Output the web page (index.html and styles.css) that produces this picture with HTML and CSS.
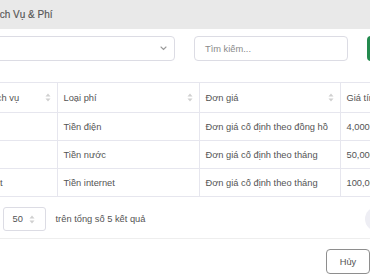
FILE: index.html
```html
<!DOCTYPE html>
<html lang="vi">
<head>
<meta charset="utf-8">
<title>Danh Sách Dịch Vụ & Phí</title>
<link rel="stylesheet" href="styles.css">
</head>
<body>
<div class="modal">
  <div class="modal-head"><h2 class="modal-title">Danh Sách Dịch Vụ &amp; Phí</h2></div>
  <div class="modal-body">
    <div class="toolbar">
      <div class="select">
        <span class="select-value"></span>
        <svg class="chevron" width="7" height="5" viewBox="0 0 7 5"><path d="M1 1l2.5 2.5L6 1" fill="none" stroke="#9a9a9a" stroke-width="1.1" stroke-linecap="round"/></svg>
      </div>
      <div class="search">Tìm kiếm...</div>
      <button class="btn-green">Thêm</button>
    </div>
    <table class="grid">
      <colgroup><col class="c1"><col class="c2"><col class="c3"><col class="c4"></colgroup>
      <thead>
        <tr>
          <th><div class="th-in"><span>Tên dịch vụ</span><svg class="sort" width="6" height="9" viewBox="0 0 6 9"><path d="M3 0.5L5.5 3.5H0.5Z M3 8.5L5.5 5.5H0.5Z" fill="#d0d0d0"/></svg></div></th>
          <th><div class="th-in"><span>Loại phí</span><svg class="sort" width="6" height="9" viewBox="0 0 6 9"><path d="M3 0.5L5.5 3.5H0.5Z M3 8.5L5.5 5.5H0.5Z" fill="#d0d0d0"/></svg></div></th>
          <th><div class="th-in"><span>Đơn giá</span><svg class="sort" width="6" height="9" viewBox="0 0 6 9"><path d="M3 0.5L5.5 3.5H0.5Z M3 8.5L5.5 5.5H0.5Z" fill="#d0d0d0"/></svg></div></th>
          <th><div class="th-in"><span>Giá tính</span></div></th>
        </tr>
      </thead>
      <tbody>
        <tr><td>Điện</td><td>Tiền điện</td><td>Đơn giá cố định theo đồng hồ</td><td>4,000</td></tr>
        <tr><td>Nước</td><td>Tiền nước</td><td>Đơn giá cố định theo tháng</td><td>50,000</td></tr>
        <tr><td>Internet</td><td>Tiền internet</td><td>Đơn giá cố định theo tháng</td><td>100,000</td></tr>
      </tbody>
    </table>
    <div class="pager">
      <div class="pager-left">
        <span class="lbl">Hiển thị</span>
        <div class="size-select"><span>50</span><svg class="sort" width="6" height="9" viewBox="0 0 6 9"><path d="M3 0.5L5.5 3.5H0.5Z M3 8.5L5.5 5.5H0.5Z" fill="#d0d0d0"/></svg></div>
        <span class="total">trên tổng số 5 kết quả</span>
      </div>
      <div class="pager-right">
        <span class="pg"></span><span class="pg"></span><span class="pg"></span>
      </div>
    </div>
  </div>
  <div class="modal-foot">
    <button class="btn-cancel">Hủy</button>
    <button class="btn-ok">Chọn</button>
  </div>
</div>
</body>
</html>
```
FILE: styles.css
```css
html, body {
  margin: 0;
  padding: 0;
  background: #ffffff;
  overflow: hidden;
}
body {
  width: 370px;
  height: 280px;
  font-family: "Liberation Sans", Arial, sans-serif;
  color: #545454;
  font-size: 9.3px;
}
.modal {
  width: 520px;
  margin-left: -50px;
}
.modal-head {
  height: 29px;
  background: #e9e9e9;
  display: flex;
  align-items: center;
  padding-left: -12px;
}
.modal-title {
  margin: 0 0 0 -12px;
  font-size: 10px;
  font-weight: normal;
  color: #555;
  -webkit-text-stroke: 0.15px #555;
}
.modal-body {
  padding: 7px 15px 0 15px;
}
.toolbar {
  display: flex;
  gap: 19px;
  height: 25px;
}
.select {
  width: 210px;
  box-sizing: border-box;
  border: 1px solid #dcdce4;
  border-radius: 4px;
  display: flex;
  align-items: center;
  justify-content: flex-end;
  padding-right: 7px;
}
.search {
  width: 154px;
  box-sizing: border-box;
  border: 1px solid #dcdce4;
  border-radius: 4px;
  display: flex;
  align-items: center;
  padding-left: 10px;
  color: #8a8a8a;
}
.btn-green {
  width: 60px;
  border: none;
  border-radius: 4px;
  background: #238a4e;
  color: #fff;
  font: inherit;
}
.grid {
  margin-top: 21px;
  width: 490px;
  border-collapse: collapse;
  table-layout: fixed;
}
.c1 { width: 92px; }
.c2 { width: 142px; }
.c3 { width: 141px; }
.c4 { width: 115px; }
.grid th, .grid td {
  border: 1px solid #e6e6ee;
  text-align: left;
  font-weight: normal;
  padding: 0 0 0 6px;
  white-space: nowrap;
  overflow: hidden;
}
.grid th {
  height: 29px;
  padding-right: 6px;
}
.grid td {
  height: 27px;
}
.grid tr > :first-child { border-left: none; }
.th-in {
  display: flex;
  align-items: center;
  justify-content: space-between;
}
.pager {
  display: flex;
  justify-content: space-between;
  align-items: center;
  height: 24px;
  margin-top: 10px;
  padding-bottom: 7px;
}
.pager-left {
  display: flex;
  align-items: center;
}
.size-select {
  width: 43px;
  height: 24px;
  box-sizing: border-box;
  margin-left: 6px;
  border: 1px solid #dcdce4;
  border-radius: 3px;
  display: flex;
  align-items: center;
  justify-content: space-between;
  padding: 0 10px 0 9px;
}
.total {
  margin-left: 10px;
}
.pager-right {
  display: flex;
  gap: 4px;
  margin-right: 10px;
}
.pg {
  width: 24px;
  height: 24px;
  border-radius: 50%;
  background: #eeeef4;
}
.modal-foot {
  border-top: 1px solid #eeeeee;
  display: flex;
  justify-content: flex-end;
  gap: 8px;
  padding: 10px 15px 0 0;
}
.btn-cancel {
  width: 44px;
  height: 25px;
  border: 1px solid #8e8e8e;
  border-radius: 4px;
  background: #fff;
  color: #545454;
  font: inherit;
}
.btn-ok {
  width: 77px;
  height: 25px;
  border: none;
  border-radius: 4px;
  background: #238a4e;
  color: #fff;
  font: inherit;
}
```
